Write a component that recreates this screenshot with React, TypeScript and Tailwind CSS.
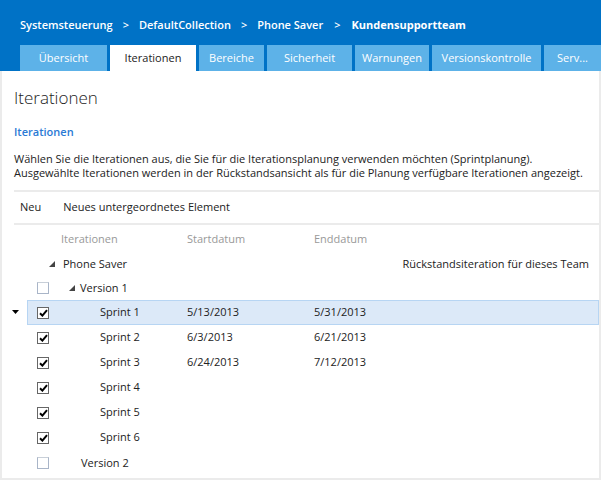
import React from "react";

const font = { fontFamily: '"Open Sans", "Noto Sans", sans-serif' };

function Check({ checked }: { checked: boolean }) {
  return checked ? (
    <div className="w-[12px] h-[12px] border border-[#666] bg-white flex items-center justify-center">
      <svg width="9" height="8" viewBox="0 0 9 8">
        <path d="M1 4.2 L3.4 6.6 L8 1.2" stroke="#000" strokeWidth="2" fill="none" />
      </svg>
    </div>
  ) : (
    <div className="w-[12px] h-[12px] border border-[#a9b5c8] border-t-[#c8cfd8] bg-white" />
  );
}

const Tri = () => (
  <svg width="7" height="7" viewBox="0 0 7 7">
    <path d="M6 0 L6 6 L0 6 Z" fill="#444" />
  </svg>
);

const tabs = [
  { t: "Übersicht", w: 87 },
  { t: "Iterationen", w: 86, active: true },
  { t: "Bereiche", w: 65 },
  { t: "Sicherheit", w: 85 },
  { t: "Warnungen", w: 74 },
  { t: "Versionskontrolle", w: 109 },
  { t: "Serv...", w: 57 },
];

const sprints = [
  { n: "Sprint 1", s: "5/13/2013", e: "5/31/2013", sel: true },
  { n: "Sprint 2", s: "6/3/2013", e: "6/21/2013" },
  { n: "Sprint 3", s: "6/24/2013", e: "7/12/2013" },
  { n: "Sprint 4", s: "", e: "" },
  { n: "Sprint 5", s: "", e: "" },
  { n: "Sprint 6", s: "", e: "" },
];

export default function App() {
  return (
    <div className="w-[601px] h-[480px] bg-white overflow-hidden text-[11px] text-[#222]" style={font}>
      <div className="bg-[#0072c6] h-[71px] flex flex-col">
        <div className="h-[45px] flex items-center pl-[20px] pt-[5px] text-white text-[11px] font-semibold">
          <span>Systemsteuerung</span>
          <span className="mx-[10px]">&gt;</span>
          <span>DefaultCollection</span>
          <span className="mx-[10px]">&gt;</span>
          <span>Phone Saver</span>
          <span className="mx-[11px]">&gt;</span>
          <span className="font-bold">Kundensupportteam</span>
        </div>
        <div className="flex pl-[20px] gap-[3px] h-[26px]">
          {tabs.map((t) => (
            <div
              key={t.t}
              className={
                "shrink-0 flex items-center justify-center pt-[1px] text-[11px] " +
                (t.active ? "bg-white text-[#222]" : "bg-[#5db2e8] text-white")
              }
              style={{ width: t.w }}
            >
              {t.t}
            </div>
          ))}
        </div>
      </div>
      <div className="h-[409px] border-x-2 border-b-2 border-[#ebebeb] pl-[12px]">
        <div className="text-[17px] font-light text-[#222] pt-[13px] leading-[28px]">Iterationen</div>
        <div className="text-[#2a7ad5] font-semibold mt-[12px] leading-[16px]">Iterationen</div>
        <div className="mt-[12px] leading-[14px]">
          <div>Wählen Sie die Iterationen aus, die Sie für die Iterationsplanung verwenden möchten (Sprintplanung).</div>
          <div>Ausgewählte Iterationen werden in der Rückstandsansicht als für die Planung verfügbare Iterationen angezeigt.</div>
        </div>
        <div className="mt-[10px] border-t-2 border-b-2 border-[#ebebeb] h-[35px] flex items-center gap-[22px] pl-[6px]">
          <span>Neu</span>
          <span>Neues untergeordnetes Element</span>
        </div>
        <div className="relative">
          <div className="h-[27px] flex items-center text-[#999] pt-[1px]">
            <span className="ml-[47px] w-[126px]">Iterationen</span>
            <span className="w-[127px]">Startdatum</span>
            <span>Enddatum</span>
          </div>
          <div className="h-[24px] flex items-center">
            <span className="ml-[35px] w-[14px]"><Tri /></span>
            <span>Phone Saver</span>
            <span className="ml-auto mr-[10px]">Rückstandsiteration für dieses Team</span>
          </div>
          <div className="h-[24px] flex items-center">
            <span className="ml-[23px] w-[32px]"><Check checked={false} /></span>
            <span className="w-[11px]"><Tri /></span>
            <span>Version 1</span>
          </div>
          {sprints.map((s) => (
            <div key={s.n} className="relative h-[25px] flex items-center">
              {s.sel && (
                <svg className="absolute left-[-2px] top-[10px]" width="8" height="4" viewBox="0 0 8 4">
                  <path d="M0 0 L7 0 L3.5 4 Z" fill="#000" />
                </svg>
              )}
              <div
                className={
                  "ml-[13px] h-full flex-1 flex items-center " +
                  (s.sel ? "bg-[#dce9f8] border border-[#b7d5f3]" : "border border-transparent")
                }
              >
                <span className="ml-[9px] w-[63px]"><Check checked /></span>
                <span className="w-[87px]">{s.n}</span>
                <span className="w-[127px]">{s.s}</span>
                <span>{s.e}</span>
              </div>
            </div>
          ))}
          <div className="h-[26px] flex items-center">
            <span className="ml-[23px] w-[44px]"><Check checked={false} /></span>
            <span>Version 2</span>
          </div>
        </div>
      </div>
    </div>
  );
}
